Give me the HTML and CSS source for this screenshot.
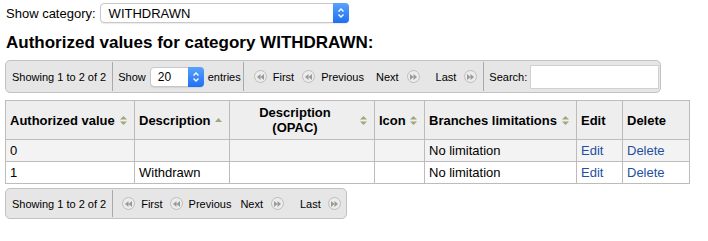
FILE: index.html
```html
<!DOCTYPE html>
<html lang="en">
<head>
  <meta charset="UTF-8">
  <title>Authorized values</title>
  <link rel="stylesheet" href="styles.css">
</head>
<body>
<div class="category-row">
    <label>Show category:</label>
    <span class="fake-select wide">WITHDRAWN<span class="sel-arrow"><svg width="8" height="12" viewBox="0 0 8 12"><path d="M1.5 4.5 L4 2 L6.5 4.5 M1.5 7.5 L4 10 L6.5 7.5" fill="none" stroke="#fff" stroke-width="1.4"/></svg></span></span>
</div>
<h3>Authorized values for category WITHDRAWN:</h3>

<div class="toolbar top">
    <div class="tb-sec info">Showing 1 to 2 of 2</div>
    <div class="tb-sec length">Show <span class="fake-select small">20<span class="sel-arrow"><svg width="8" height="12" viewBox="0 0 8 12"><path d="M1.5 4.5 L4 2 L6.5 4.5 M1.5 7.5 L4 10 L6.5 7.5" fill="none" stroke="#fff" stroke-width="1.4"/></svg></span></span> entries</div>
    <div class="tb-sec paging">
        <span class="pg first"><i class="pg-ico prev"></i>First</span>
        <span class="pg prev"><i class="pg-ico prev"></i>Previous</span>
        <span class="pg next">Next<i class="pg-ico next"></i></span>
        <span class="pg last">Last<i class="pg-ico next"></i></span>
    </div>
    <div class="tb-sec search">Search:<span class="search-box"></span></div>
</div>

<table class="values">
    <colgroup>
        <col style="width:129px"><col style="width:95px"><col style="width:145px"><col style="width:50px">
        <col style="width:152px"><col style="width:46px"><col style="width:67px">
    </colgroup>
    <thead>
        <tr>
            <th class="sort both">Authorized value</th>
            <th class="sort asc">Description</th>
            <th class="sort both center">Description<br>(OPAC)</th>
            <th class="sort both">Icon</th>
            <th class="sort both">Branches limitations</th>
            <th>Edit</th>
            <th>Delete</th>
        </tr>
    </thead>
    <tbody>
        <tr class="odd">
            <td>0</td><td></td><td></td><td></td><td>No limitation</td>
            <td><a href="#">Edit</a></td><td><a href="#">Delete</a></td>
        </tr>
        <tr>
            <td>1</td><td>Withdrawn</td><td></td><td></td><td>No limitation</td>
            <td><a href="#">Edit</a></td><td><a href="#">Delete</a></td>
        </tr>
    </tbody>
</table>

<div class="toolbar bottom">
    <div class="tb-sec info">Showing 1 to 2 of 2</div>
    <div class="tb-sec paging">
        <span class="pg first"><i class="pg-ico prev"></i>First</span>
        <span class="pg prev"><i class="pg-ico prev"></i>Previous</span>
        <span class="pg next">Next<i class="pg-ico next"></i></span>
        <span class="pg last">Last<i class="pg-ico next"></i></span>
    </div>
</div>
</body>
</html>
```

FILE: styles.css
```css
body {
  font-family: "Liberation Sans", Arial, sans-serif;
  font-size: 13px;
  color: #000;
  margin: 0;
  padding: 3px 5px;
  background: #fff;
}
.category-row {
  display: flex;
  align-items: center;
  height: 20px;
}
.category-row label {
  margin: 0 4px 0 1px;
}
.fake-select {
  position: relative;
  display: inline-flex;
  align-items: center;
  box-sizing: border-box;
  height: 20px;
  border: 1px solid #c8c8c8;
  border-radius: 4px;
  background: #fff;
  padding-left: 8px;
  box-shadow: 0 1px 1px rgba(0, 0, 0, 0.08);
}
.fake-select.wide {
  width: 249px;
}
.fake-select.small {
  width: 54px;
  margin: 0 4px 0 4px;
  padding-left: 7px;
  flex-shrink: 0;
  font-size: 12px;
}
.sel-arrow {
  position: absolute;
  right: -1px;
  top: -1px;
  width: 16px;
  height: 20px;
  border-radius: 0 4px 4px 0;
  background: linear-gradient(#5aa2fb, #1e6ff5);
  display: flex;
  align-items: center;
  justify-content: center;
}
h3 {
  font-size: 17px;
  margin: 9px 0 0 1px;
  height: 28px;
  line-height: 22px;
}
.toolbar {
  display: flex;
  align-items: stretch;
  box-sizing: border-box;
  border: 1px solid #c2c2c2;
  border-radius: 5px;
  background: #e6e6e6;
  white-space: nowrap;
  font-size: 11px;
}
.toolbar.top {
  width: 656px;
  height: 33px;
}
.toolbar.bottom {
  width: 342px;
  height: 31px;
  margin-top: 4px;
}
.tb-sec {
  display: flex;
  align-items: center;
  flex-shrink: 0;
  border-left: 1px solid #a9a9a9;
  margin: 1px 0;
}
.tb-sec.info {
  border-left: none;
  padding: 0 6px 0 6px;
}
.tb-sec.length {
  padding: 0 2px 0 5px;
}
.tb-sec.paging {
  padding: 0 6px 0 10px;
}
.bottom .tb-sec.paging {
  padding-left: 9px;
}
.pg {
  display: flex;
  align-items: center;
  gap: 6px;
  margin-right: 7px;
}
.pg.next {
  margin-right: 16px;
  margin-left: 2px;
  gap: 8px;
}
.pg.last {
  gap: 7px;
  margin-right: 0;
}
.top .pg {
  margin-right: 8px;
}
.top .pg.next {
  margin-left: 4px;
  margin-right: 16px;
}
.top .pg.last {
  gap: 8px;
  margin-right: 0;
}
.pg-ico {
  display: inline-block;
  width: 13px;
  height: 13px;
  box-sizing: border-box;
  border-radius: 50%;
  border: 1px solid #bdbdbd;
  background-color: #ececec;
  background-repeat: no-repeat;
  background-position: center;
}
.pg-ico.prev {
  background-image: url("data:image/svg+xml,%3Csvg xmlns='http://www.w3.org/2000/svg' width='7' height='6'%3E%3Cpath d='M0 3 L3.5 0 L3.5 6Z M3.5 3 L7 0 L7 6Z' fill='%23999'/%3E%3C/svg%3E");
}
.pg-ico.next {
  background-image: url("data:image/svg+xml,%3Csvg xmlns='http://www.w3.org/2000/svg' width='7' height='6'%3E%3Cpath d='M0 0 L3.5 3 L0 6Z M3.5 0 L7 3 L3.5 6Z' fill='%23999'/%3E%3C/svg%3E");
}
.tb-sec.search {
  padding: 0 3px 0 5px;
}
.search-box {
  display: inline-block;
  width: 129px;
  height: 24px;
  margin-left: 3px;
  background: #fff;
  border: 1px solid #d0d0d0;
  box-sizing: border-box;
}
table.values {
  border-collapse: collapse;
  table-layout: fixed;
  width: 684px;
  margin-top: 7px;
}
.values th,
.values td {
  border: 1px solid #bcbcbc;
  text-align: left;
}
.values th {
  background: #eeeeee;
  font-weight: bold;
  height: 30px;
  padding: 4px 18px 4px 4px;
  line-height: 15px;
  background-repeat: no-repeat;
  background-position: right 7px center;
}
.values th.center {
  text-align: center;
}
.values th.both {
  background-image: url("data:image/svg+xml,%3Csvg xmlns='http://www.w3.org/2000/svg' width='7' height='9'%3E%3Cpath d='M0 3.5 L3.5 0 L7 3.5Z M0 5.5 L3.5 9 L7 5.5Z' fill='%23a3a67b'/%3E%3C/svg%3E");
}
.values th.asc {
  background-image: url("data:image/svg+xml,%3Csvg xmlns='http://www.w3.org/2000/svg' width='7' height='9'%3E%3Cpath d='M0 6 L3.5 2 L7 6Z' fill='%23a3a67b'/%3E%3C/svg%3E");
}
.values td {
  height: 22px;
  padding: 0 4px;
  box-sizing: border-box;
}
.values tr.odd td {
  background: #f3f3f3;
}
.values a {
  color: #1f4fa0;
  text-decoration: none;
}
```
